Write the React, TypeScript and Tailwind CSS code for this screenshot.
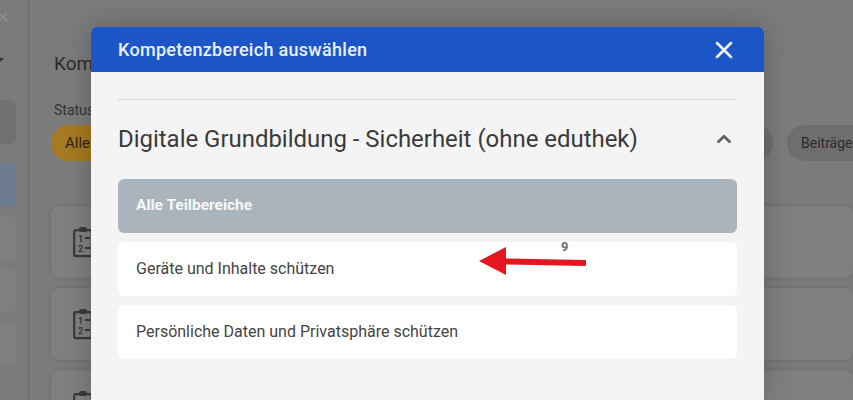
import { ChevronUp, X } from 'lucide-react';

const navRows = ['bg-[#6f7173]', 'bg-[#6d7b8f]', 'bg-[#7f7f7f]', 'bg-[#7f7f7f]', 'bg-[#7f7f7f]'];
const subAreas = ['Geräte und Inhalte schützen', 'Persönliche Daten und Privatsphäre schützen'];

function ChecklistIcon({ numbered }: { numbered: boolean }) {
  return (
    <svg width="20" height="32" viewBox="0 0 20 32" fill="none" className="shrink-0 text-[#3a3a3a]">
      <rect x="1.2" y="4.2" width="17.6" height="26" rx="2" stroke="currentColor" strokeWidth="2.2" />
      <rect x="6" y="1" width="8" height="5" rx="2" fill="currentColor" />
      {numbered && (
        <>
          <text x="5" y="15.5" fontSize="9" fontWeight="700" fill="currentColor" fontFamily="Roboto, sans-serif">1</text>
          <text x="5" y="25.5" fontSize="9" fontWeight="700" fill="currentColor" fontFamily="Roboto, sans-serif">2</text>
        </>
      )}
      <rect x="12" y="11" width="5" height="2" fill="currentColor" />
      <rect x="12" y="21" width="5" height="2" fill="currentColor" />
    </svg>
  );
}

function RedArrow() {
  return (
    <svg width="108" height="30" viewBox="0 0 108 30" className="absolute left-[478px] top-[247px]">
      <path d="M1 14 L28 0 L28 11.5 L108 13 L108 19 L28 17.5 L28 28 Z" fill="#e2171f" />
    </svg>
  );
}

export default function App() {
  return (
    <div className="relative h-[400px] w-[853px] overflow-hidden bg-[#7b7b7b] font-['Roboto',sans-serif]">
      {/* Gedimmte Seite im Hintergrund */}
      <div className="flex h-full">
        <aside className="flex w-[29px] shrink-0 flex-col border-r border-[#6c6c6c] pt-[9px]">
          <X className="ml-[-5px] size-[16px] text-[#8f8f8f]" />
          <div className="mt-[33px] ml-[-6px] h-0 w-0 border-x-[5px] border-t-[5px] border-x-transparent border-t-[#333]" />
          <div className="mt-[37px] flex flex-col gap-[9px]">
            {navRows.map((bg, i) => (
              <div key={i} className={`h-[44px] w-[16px] rounded-r-md ${bg} ${i === 0 ? 'mb-[10px]' : ''}`} />
            ))}
          </div>
        </aside>
        <main className="min-w-0 flex-1 pl-[22px]">
          <h1 className="ml-[3px] mt-[52px] h-[24px] text-[19px] leading-[24px] text-[#2b2b2b]">Kom</h1>
          <p className="mt-[26px] ml-[3px] text-[14px] leading-[16px] text-[#333]">Status</p>
          <div className="mt-[7px] flex h-[36px] justify-between">
            <span className="flex w-[80px] items-center rounded-full bg-[#a67a22] pl-[14px] text-[15px] text-[#2f2413]">Alle</span>
            <div className="flex gap-[14px]">
              <span className="w-[60px] rounded-full bg-[#6e6e6e]" />
              <span className="flex w-[66px] items-center whitespace-nowrap rounded-l-full bg-[#6e6e6e] pl-[14px] text-[14px] text-[#2b2b2b]">Beiträge</span>
            </div>
          </div>
          <div className="mt-[45px] flex flex-col gap-[10px]">
            {[0, 1, 2].map((i) => (
              <div key={i} className="flex h-[72px] items-center rounded-lg bg-[#7f7f7f] pl-[22px] shadow-[0_0_5px_rgba(0,0,0,0.14)]">
                <ChecklistIcon numbered={i < 2} />
              </div>
            ))}
          </div>
        </main>
      </div>

      {/* Dialog */}
      <div className="absolute left-[91px] top-[27px] h-[373px] w-[673px] overflow-hidden rounded-t-[5px] bg-[#f4f4f4] shadow-[0_0_28px_rgba(0,0,0,0.22)]">
        <header className="flex h-[45px] items-center justify-between bg-[#1c55c5] pl-[27px] pr-[26px]">
          <h2 className="text-[18px] font-medium tracking-[0.29px] text-[#e8f0fb]">Kompetenzbereich auswählen</h2>
          <X className="size-[28px] text-[#f2f6fc]" strokeWidth={2.2} />
        </header>
        <div className="px-[27px]">
          <div className="mt-[27px] border-t border-[#d2d3d4]" />
          <div className="mt-[20px] flex h-[38px] items-center justify-between">
            <h3 className="text-[23.95px] leading-[38px] text-[#3a3a3a]">Digitale Grundbildung - Sicherheit (ohne eduthek)</h3>
            <ChevronUp className="mr-[2px] size-[22px] text-[#606060]" strokeWidth={3} />
          </div>
          <div className="mt-[21px] flex flex-col gap-[9px]">
            <div className="flex h-[54px] items-center rounded-[6px] bg-[#aab4bc] pl-[18px] text-[15.5px] font-bold text-[#f7f8f9]">
              Alle Teilbereiche
            </div>
            {subAreas.map((label) => (
              <div key={label} className="flex h-[54px] items-center rounded-[6px] bg-white pl-[18px] text-[16px] text-[#444]">
                {label}
              </div>
            ))}
          </div>
        </div>
      </div>

      {/* Markierung im Screenshot */}
      <RedArrow />
      <span className="absolute left-[561px] top-[240px] text-[13px] font-bold leading-[14px] text-[#6f6f6f]">9</span>
    </div>
  );
}
